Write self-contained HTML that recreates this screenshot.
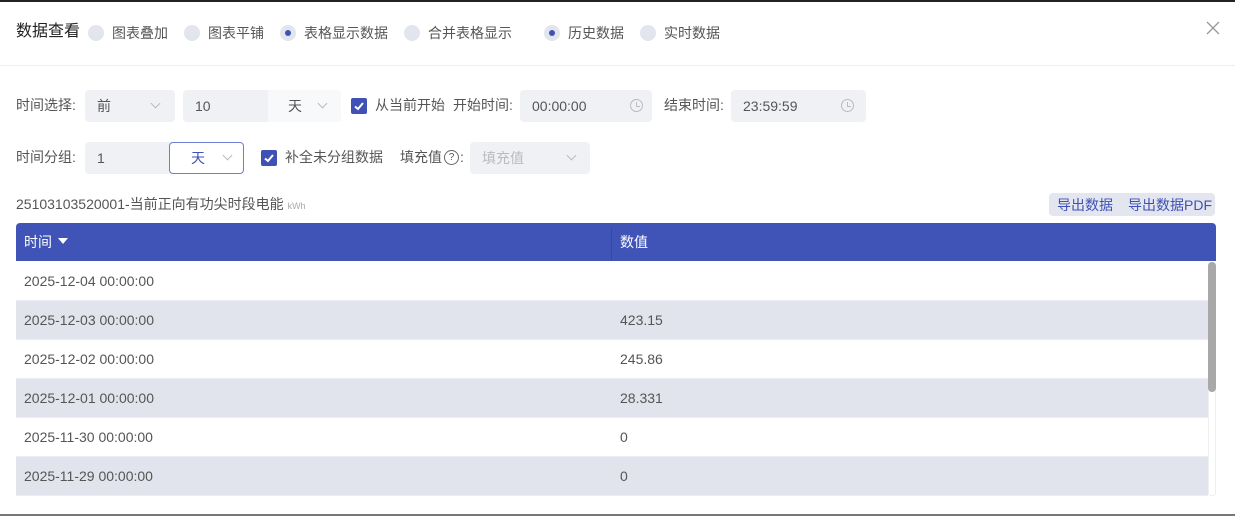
<!DOCTYPE html>
<html><head><meta charset="utf-8"><style>
*{box-sizing:border-box;margin:0;padding:0}
body{width:1235px;height:516px;overflow:hidden;background:#fff;font-family:"Liberation Sans","Noto Sans CJK SC",sans-serif;font-size:14px;color:#555;position:relative}
.a{position:absolute;white-space:nowrap;line-height:18px}
.r{position:absolute;width:16px;height:16px;border-radius:50%;background:#e3e5ee}
.r.on::after{content:"";position:absolute;left:5px;top:5px;width:6px;height:6px;border-radius:50%;background:#3f51b5}
.in{position:absolute;background:#f0f1f4;border-radius:4px;height:32px;line-height:32px;padding-left:12px;color:#555}
.cb{position:absolute;width:16px;height:16px;border-radius:2px;background:#3f51b5}
.chev{position:absolute;width:7px;height:7px;border-right:1px solid #bbb;border-bottom:1px solid #bbb;transform:rotate(45deg)}
.clk{position:absolute;width:13px;height:13px;border:1px solid #bbb;border-radius:50%}
.clk::after{content:"";position:absolute;left:5px;top:2px;width:3px;height:4px;border-left:1px solid #bbb;border-bottom:1px solid #bbb}
.row{position:absolute;left:16px;width:1192px;height:39px;line-height:39px;border-bottom:1px solid #eceef3}
.row.g{background:#e1e4ec}
.row span{position:absolute}
</style></head><body>
<div class="a" style="left:0;top:0;width:1235px;height:2px;background:#222"></div>
<div class="a" style="left:16px;top:23px;font-size:16px;color:#222">数据查看</div>
<div class="r" style="left:88px;top:25px"></div><div class="a" style="left:112px;top:24px">图表叠加</div>
<div class="r" style="left:184px;top:25px"></div><div class="a" style="left:208px;top:24px">图表平铺</div>
<div class="r on" style="left:280px;top:25px"></div><div class="a" style="left:304px;top:24px">表格显示数据</div>
<div class="r" style="left:404px;top:25px"></div><div class="a" style="left:428px;top:24px">合并表格显示</div>
<div class="r on" style="left:544px;top:25px"></div><div class="a" style="left:568px;top:24px">历史数据</div>
<div class="r" style="left:640px;top:25px"></div><div class="a" style="left:664px;top:24px">实时数据</div>
<svg class="a" style="left:1206px;top:21px" width="14" height="14"><path d="M1 1L13 13M13 1L1 13" stroke="#999" stroke-width="1.3"/></svg>
<div class="a" style="left:0;top:65px;width:1235px;height:1px;background:#eceef2"></div>

<div class="a" style="left:16px;top:96px">时间选择:</div>
<div class="in" style="left:85px;top:90px;width:90px">前</div><div class="chev" style="left:152px;top:100px"></div>
<div class="in" style="left:183px;top:90px;width:158px">10</div>
<div class="in" style="left:268px;top:90px;width:73px;background:#f8f9fa;border-radius:0 4px 4px 0;padding-left:20px">天</div><div class="chev" style="left:319px;top:100px"></div>
<div class="cb" style="left:351px;top:98px"></div><svg class="a" style="left:351px;top:98px" width="16" height="16"><path d="M4 8.5L7 11L12 5" stroke="#fff" stroke-width="2" fill="none"/></svg>
<div class="a" style="left:375px;top:96px">从当前开始</div>
<div class="a" style="left:453px;top:96px">开始时间:</div>
<div class="in" style="left:520px;top:90px;width:132px">00:00:00</div><div class="clk" style="left:630px;top:99px"></div>
<div class="a" style="left:664px;top:96px">结束时间:</div>
<div class="in" style="left:731px;top:90px;width:135px">23:59:59</div><div class="clk" style="left:841px;top:99px"></div>

<div class="a" style="left:16px;top:148px">时间分组:</div>
<div class="in" style="left:85px;top:142px;width:90px">1</div>
<div class="in" style="left:169px;top:142px;width:75px;background:#fff;border:1px solid #6f7fd0;padding-left:21px;line-height:30px;color:#3f51b5">天</div><div class="chev" style="left:224px;top:152px"></div>
<div class="cb" style="left:261px;top:150px"></div><svg class="a" style="left:261px;top:150px" width="16" height="16"><path d="M4 8.5L7 11L12 5" stroke="#fff" stroke-width="2" fill="none"/></svg>
<div class="a" style="left:285px;top:148px">补全未分组数据</div>
<div class="a" style="left:400px;top:148px">填充值</div>
<div class="a" style="left:444px;top:150px;width:15px;height:15px;border:1px solid #666;border-radius:50%;font-size:10px;line-height:13px;text-align:center;color:#555">?</div>
<div class="a" style="left:460px;top:148px">:</div>
<div class="in" style="left:470px;top:142px;width:120px;color:#bbb">填充值</div><div class="chev" style="left:568px;top:152px"></div>

<div class="a" style="left:16px;top:195px">25103103520001-当前正向有功尖时段电能 <span style="font-size:9px;color:#aaa">kWh</span></div>
<div class="a" style="left:1049px;top:193px;width:166px;height:23px;background:#e3e6ef;border-radius:4px"></div>
<div class="a" style="left:1057px;top:196px;color:#3f51b5">导出数据</div>
<div class="a" style="left:1128px;top:196px;color:#3f51b5">导出数据PDF</div>

<div class="a" style="left:16px;top:223px;width:1200px;height:38px;background:#4054b8;border-radius:4px 4px 0 0"></div>
<div class="a" style="left:24px;top:233px;color:#fff">时间</div>
<svg class="a" style="left:58px;top:238px" width="10" height="7"><path d="M0 0H10L5 6Z" fill="#fff"/></svg>
<div class="a" style="left:611px;top:228px;width:1px;height:33px;background:#3648a0"></div>
<div class="a" style="left:620px;top:233px;color:#fff">数值</div>

<div class="row" style="top:262px"><span style="left:8px">2025-12-04 00:00:00</span></div>
<div class="row g" style="top:301px"><span style="left:8px">2025-12-03 00:00:00</span><span style="left:604px">423.15</span></div>
<div class="row" style="top:340px"><span style="left:8px">2025-12-02 00:00:00</span><span style="left:604px">245.86</span></div>
<div class="row g" style="top:379px"><span style="left:8px">2025-12-01 00:00:00</span><span style="left:604px">28.331</span></div>
<div class="row" style="top:418px"><span style="left:8px">2025-11-30 00:00:00</span><span style="left:604px">0</span></div>
<div class="row g" style="top:457px"><span style="left:8px">2025-11-29 00:00:00</span><span style="left:604px">0</span></div>
<div class="a" style="left:1208px;top:262px;width:8px;height:234px;border:1px solid #eee;border-radius:3px"></div>
<div class="a" style="left:1208px;top:262px;width:8px;height:130px;background:#a8a8a8;border-radius:4px"></div>
<div class="a" style="left:0;top:514px;width:1235px;height:2px;background:#777"></div>
</body></html>
